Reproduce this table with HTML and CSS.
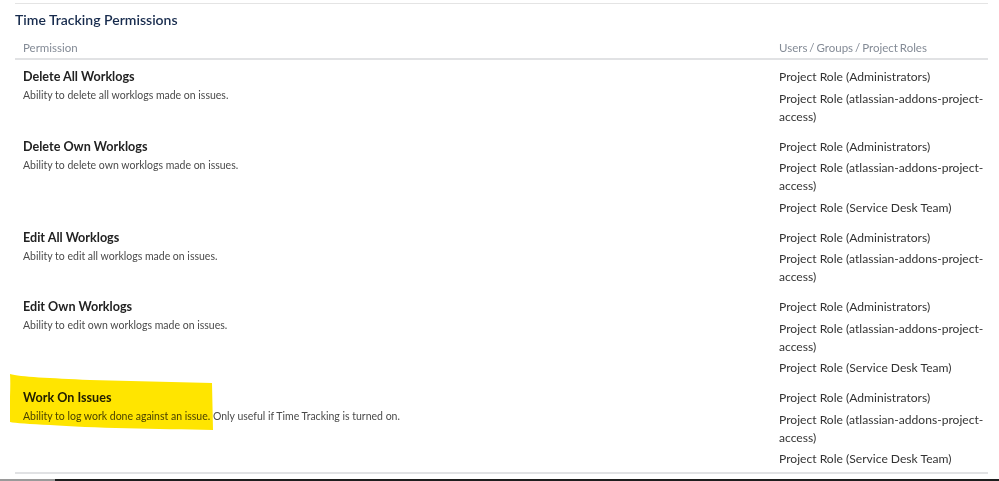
FILE: index.html
```html
<!DOCTYPE html>
<html lang="en">
<head>
  <meta charset="UTF-8" />
  <meta name="viewport" content="width=device-width, initial-scale=1" />
  <title>Time Tracking Permissions</title>
  <link rel="stylesheet" href="styles.css">
</head>
<body>
  <div class="section">
    <h2 class="section-title">Time Tracking Permissions</h2>

    <table class="perm-table">
      <thead>
        <tr>
          <th class="col-perm">Permission</th>
          <th class="col-users">Users / Groups / Project Roles</th>
        </tr>
      </thead>
      <tbody>
        <tr>
          <td>
            <div class="perm-name">Delete All Worklogs</div>
            <div class="perm-desc">Ability to delete all worklogs made on issues.</div>
          </td>
          <td class="users">
            <ul class="roles">
              <li>Project Role (Administrators)</li>
              <li>Project Role (atlassian-addons-project-access)</li>
            </ul>
          </td>
        </tr>
        <tr>
          <td>
            <div class="perm-name">Delete Own Worklogs</div>
            <div class="perm-desc">Ability to delete own worklogs made on issues.</div>
          </td>
          <td class="users">
            <ul class="roles">
              <li>Project Role (Administrators)</li>
              <li>Project Role (atlassian-addons-project-access)</li>
              <li>Project Role (Service Desk Team)</li>
            </ul>
          </td>
        </tr>
        <tr>
          <td>
            <div class="perm-name">Edit All Worklogs</div>
            <div class="perm-desc">Ability to edit all worklogs made on issues.</div>
          </td>
          <td class="users">
            <ul class="roles">
              <li>Project Role (Administrators)</li>
              <li>Project Role (atlassian-addons-project-access)</li>
            </ul>
          </td>
        </tr>
        <tr>
          <td>
            <div class="perm-name">Edit Own Worklogs</div>
            <div class="perm-desc">Ability to edit own worklogs made on issues.</div>
          </td>
          <td class="users">
            <ul class="roles">
              <li>Project Role (Administrators)</li>
              <li>Project Role (atlassian-addons-project-access)</li>
              <li>Project Role (Service Desk Team)</li>
            </ul>
          </td>
        </tr>
        <tr>
          <td class="marked">
            <svg class="marker" width="204" height="57" viewBox="0 0 204 57" aria-hidden="true">
              <path d="M0,0 C10,3 40,4 80,6 L202,9 L203,56 C150,55 80,54 40,51 C20,50 5,49 0,48 C-1,30 1,15 0,0 Z" fill="#ffe500"/>
            </svg>
            <div class="perm-name">Work On Issues</div>
            <div class="perm-desc">Ability to log work done against an issue. Only useful if Time Tracking is turned on.</div>
          </td>
          <td class="users">
            <ul class="roles">
              <li>Project Role (Administrators)</li>
              <li>Project Role (atlassian-addons-project-access)</li>
              <li>Project Role (Service Desk Team)</li>
            </ul>
          </td>
        </tr>
      </tbody>
    </table>
  </div>

  <div class="taskbar"></div>
</body>
</html>
```

FILE: styles.css
```css
:root {
  --navy: #172b4d;
  --text: #333;
  --muted: #848b96;
  --line: #e1e2e4;
}
body {
  margin: 0;
  font-family: Lato, 'Noto Sans', sans-serif;
  color: var(--text);
  background: #fff;
}
.section {
  margin: 3px 11px 0 15px;
  border-top: 1px solid #e4e4e4;
}
.section-title {
  margin: 0;
  padding: 7px 0 0;
  font-size: 14px;
  font-weight: 600;
  line-height: 18px;
  color: var(--navy);
}
.perm-table {
  width: 100%;
  margin-top: 7px;
  border-collapse: collapse;
  border-bottom: 2px solid var(--line);
}
.perm-table th {
  text-align: left;
  font-size: 11.5px;
  font-weight: normal;
  color: var(--muted);
  padding: 3px 8px 1px;
  line-height: 18px;
  border-bottom: 2px solid var(--line);
}
.perm-table th.col-users {
  width: 209px;
  padding-right: 0;
  word-spacing: -1px;
}
.perm-table td {
  vertical-align: top;
  padding: 8px 8px 4px;
}
.perm-table td.users {
  padding-right: 0;
}
.perm-name {
  font-size: 12.6px;
  font-weight: bold;
  line-height: 18px;
  color: #222;
}
.perm-desc {
  font-size: 10.5px;
  line-height: 18px;
  color: #4a4a4a;
}
.roles {
  list-style: none;
  margin: 0;
  padding: 0;
  font-size: 12.1px;
  line-height: 18px;
}
.roles li + li {
  margin-top: 3.5px;
}
.marked {
  position: relative;
}
.marker {
  position: absolute;
  left: -5px;
  top: -7px;
  mix-blend-mode: multiply;
}
.taskbar {
  margin-top: 5px;
  height: 3px;
  background: linear-gradient(to right, #9a9a9a 0, #9a9a9a 55px, #1e1e1e 55px);
}
```
